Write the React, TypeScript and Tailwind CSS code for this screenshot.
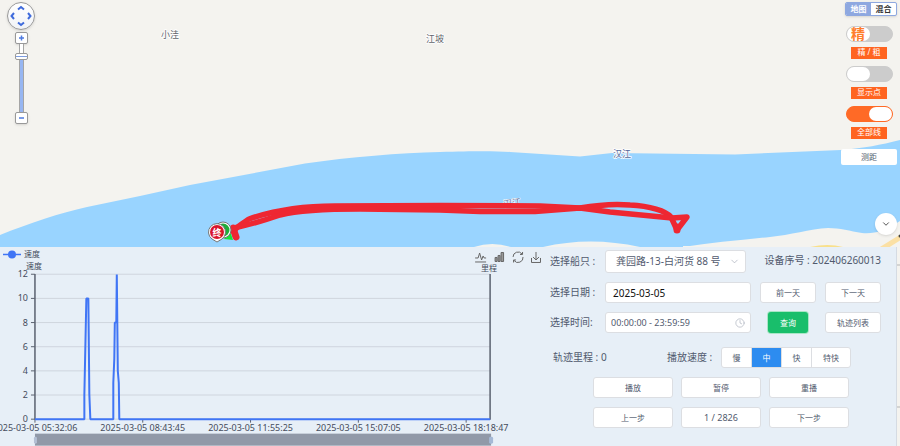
import { useState } from "react";
import { ChevronDown, Clock } from "lucide-react";
import clsx from "clsx";

const speeds = ["慢", "中", "快", "特快"];
const yTicks = [12, 10, 8, 6, 4, 2, 0];
const xTicks = [
  { x: 35, label: "2025-03-05 05:32:06" },
  { x: 143, label: "2025-03-05 08:43:45" },
  { x: 251, label: "2025-03-05 11:55:25" },
  { x: 359, label: "2025-03-05 15:07:05" },
  { x: 467, label: "2025-03-05 18:18:47" },
];

const buttonClass =
  "h-[21px] w-full rounded-[3px] border border-[#dcdee2] bg-white text-[8px] text-[#515a6e] flex items-center justify-center";

function RiverMap() {
  return (
    <svg
      className="absolute inset-0 h-full w-full"
      viewBox="0 0 900 446"
      preserveAspectRatio="xMinYMin slice"
    >
      <rect width="900" height="446" fill="#f4f3ef" />
      <path
        d="M0 235 C30 223 60 213 87 207 L140 196 L190 185 L305 163.500 C350 157 400 153 440 152 C475 151 495 151 510 152 L580 156.500 L612 153 L735 154.500 L841 150 C865 148 880 145 900 140 V221 C885 231 875 234 862 233 C850 231 840 228 828 228 C810 229 790 235 770 237 C740 240 710 243 683 247 V446 H0 Z"
        fill="#99d4ff"
      />
      <path d="M474 247 Q492 241 511 247 Z" fill="#f4f3ef" />
      <path d="M543 247 Q590 236 640 247 Z" fill="#f4f3ef" />
      <path d="M683 246 H900 V446 H683 Z" fill="#f4f3ef" />
      <path d="M810 247 Q828 243 843 247 Z" fill="#f8e08c" />
      <path d="M880 250 L901 237" stroke="#fbe0a4" strokeWidth="5" />
      <path d="M896 265 H900 M896 407 H900" stroke="#b5b5b5" />
      <circle cx="900" cy="236" r="1.500" fill="#444" />

      <g fontSize="9" fill="#60646c" textAnchor="middle" stroke="#fff" strokeWidth="1.500" paintOrder="stroke">
        <text x="170" y="38">小洼</text>
        <text x="435" y="42">江坡</text>
        <text x="622" y="157" fill="#52689a">汉江</text>
        <text x="512" y="206" fill="#52689a" strokeWidth="1" transform="rotate(-8 512 202)">汉江</text>
      </g>

      {/* sailed track, out and back */}
      <g fill="none" stroke="#ee2732" strokeWidth="5.500" strokeLinecap="round" strokeLinejoin="round">
        <path d="M236 237 C231 230 237 227 249 219 C275 210 305 206 335 206 L440 205.500 L540 206 L580 208 C600 204.500 620 204 630 205 C650 206 666 211 671 217 L677 230" />
        <path d="M234 228 C243 226 260 222 280 215 C300 210 330 209 360 209 L440 210 L480 211.500 L535 211.500 L580 208 L610 212 L672 218 L687 217 L677 230" />
        <path d="M233 228 L236 237 M677 227 V230" strokeWidth="7" />
      </g>

      {/* start and end markers */}
      <path d="M224 239 L233 240 L230 231 Z" fill="#15e53a" />
      <circle cx="223" cy="230" r="8" fill="#fff" stroke="#777" />
      <circle cx="223" cy="230" r="6.500" fill="#1fae3b" />
      <path
        d="M217 242 L212 239 A8.500 8.500 0 1 1 222 239 Z"
        fill="#fff"
        stroke="#777"
      />
      <circle cx="217" cy="232" r="7" fill="#d9152b" />
      <text x="217" y="236" fontSize="9" fontWeight="700" fill="#fff" textAnchor="middle">
        终
      </text>
    </svg>
  );
}

function MapNavigation() {
  return (
    <div className="flex w-[28px] flex-col items-center">
      <button
        aria-label="平移"
        className="h-[28px] w-[28px] rounded-full border border-[#999] bg-linear-to-b from-white to-[#f1f3f6] shadow-sm"
      >
        <svg viewBox="0 0 26 26" fill="none" stroke="#3f6bdc" strokeWidth="2">
          <path d="M10 6.500 L13 4 L16 6.500 M10 19.500 L13 22 L16 19.500 M6 10 L3.500 13 L6 16 M20 10 L22.500 13 L20 16" />
        </svg>
      </button>
      <button
        aria-label="放大"
        className="mt-[2px] h-[12px] w-[13px] rounded-[2px] border border-[#999] bg-white shadow-sm"
      >
        <svg viewBox="0 0 11 10" stroke="#4d7ae0" strokeWidth="1.500">
          <path d="M3 5 H8 M5.500 2.500 V7.500" />
        </svg>
      </button>
      <div className="grid justify-items-center">
        <div className="col-start-1 row-start-1 h-[68px] w-[5px] border-x border-[#a5a5a5] bg-linear-to-b from-white from-15% to-[#97b6f2] to-15%" />
        <input
          type="range"
          aria-label="缩放级别"
          min={0}
          max={100}
          defaultValue={14}
          className="col-start-1 row-start-1 h-[68px] w-[13px] appearance-none bg-transparent [writing-mode:vertical-lr] [&::-webkit-slider-thumb]:h-[7px] [&::-webkit-slider-thumb]:w-[13px] [&::-webkit-slider-thumb]:appearance-none [&::-webkit-slider-thumb]:rounded-[2px] [&::-webkit-slider-thumb]:border [&::-webkit-slider-thumb]:border-[#999] [&::-webkit-slider-thumb]:bg-[linear-gradient(#fff_2px,#7d9ce0_2px,#7d9ce0_3px,#fff_3px)]"
        />
      </div>
      <button
        aria-label="缩小"
        className="h-[12px] w-[13px] rounded-[2px] border border-[#999] bg-white shadow-sm"
      >
        <svg viewBox="0 0 11 10" stroke="#4d7ae0" strokeWidth="1.500">
          <path d="M3 5 H8" />
        </svg>
      </button>
    </div>
  );
}

type MapSwitchProps = {
  label: string;
  knob?: string;
  defaultChecked?: boolean;
};

function MapSwitch({ label, knob, defaultChecked }: MapSwitchProps) {
  const [checked, setChecked] = useState(!!defaultChecked);

  return (
    <label className="flex cursor-pointer flex-col items-center gap-[5px]">
      <input
        type="checkbox"
        className="sr-only"
        checked={checked}
        onChange={(e) => setChecked(e.target.checked)}
      />
      <span
        className={clsx(
          "flex h-[16px] w-[47px] rounded-full border",
          checked ? "justify-end border-[#ff6a26] bg-[#ff6a26]" : "border-[#ccc] bg-[#ccc]",
        )}
      >
        <span className="flex h-[14px] w-[23px] items-center justify-center rounded-full bg-white text-[14px] leading-none font-bold text-[#ff7d2b]">
          {knob}
        </span>
      </span>
      <span className="h-[12px] w-[36px] bg-[#ff6420] text-center text-[8px] leading-[10px] text-white">
        {label}
      </span>
    </label>
  );
}

function SpeedChart() {
  return (
    <svg viewBox="0 0 550 199" className="block w-full" fill="none">
      <g fill="#454c5c">
        <path d="M3 7.500 H21" stroke="#4075f5" strokeWidth="1.500" />
        <circle cx="12" cy="7.500" r="4" fill="#4075f5" />
        <text x="24" y="10" fontSize="8">速度</text>
        <text x="26" y="22" fontSize="8">速度</text>
        <text x="482" y="24" fontSize="8">里程</text>
      </g>

      {/* toolbox */}
      <g stroke="#666">
        <path d="M476 11 H479 L480.500 6 L482.500 13 L484 9 L485 11 H487 M476 15 H487" />
        <path d="M496 10.500 H498 V14.500 H496 Z M499 8.500 H501 V14.500 H499 Z M502 5.500 H504.500 V14.500 H502 Z" fill="#999" />
        <path d="M514 10 A5 5 0 0 1 523 7 M524 10 A5 5 0 0 1 515 13.500 M523.500 5 V7.500 H521 M514.500 15.500 V13 H517" />
        <path d="M537 5 V13 M534 10 L537 13 L540 10 M532.500 11 V15.500 H541.500 V11" />
      </g>

      {yTicks.map((value) => {
        const y = 172.5 - value * 12.1;
        return (
          <g key={value}>
            <path d={`M35 ${y} H491`} stroke="#cfd5de" />
            <path d={`M31 ${y} H35`} stroke="#5b6270" />
            <text x="28" y={y + 3} fontSize="9" fill="#454c5c" textAnchor="end">
              {value}
            </text>
          </g>
        );
      })}
      <path d="M35 27 V173 M491 27 V173" stroke="#5b6270" strokeWidth="1.500" />

      {xTicks.map((tick) => (
        <g key={tick.x}>
          <path d={`M${tick.x} 173 V176`} stroke="#5b6270" />
          <text x={tick.x} y="184" fontSize="9" fill="#454c5c" textAnchor="middle">
            {tick.label}
          </text>
        </g>
      ))}

      <path
        d="M35 172.500 H84.500 V148 L86.500 51.500 H88.500 L89.500 148 L90.500 172.500 H113.500 V136 L114.500 112 L115 76 L116.500 75 L117 27.500 L118 124 L119 136 L119.500 172.500 H491"
        stroke="#4075f5"
        strokeWidth="2"
        strokeLinejoin="bevel"
      />

      <rect x="35" y="187" width="457" height="12" fill="#9199a8" />
      <rect x="34" y="190" width="3" height="7" rx="1.500" fill="#b4c0d4" />
      <rect x="490" y="190" width="4" height="7" rx="1.500" fill="#a5b9d6" />
    </svg>
  );
}

function TrackForm() {
  const [speed, setSpeed] = useState("中");
  const [date, setDate] = useState("2025-03-05");
  const [time, setTime] = useState("00:00:00 - 23:59:59");

  return (
    <form
      className="w-[347px] shrink-0 pt-[3px] pb-4 pl-px text-[10px] text-[#515a6e]"
      onSubmit={(e) => e.preventDefault()}
    >
      <div className="grid grid-cols-[46px_146px_56px_56px] items-center gap-x-[9px] gap-y-[9px] whitespace-nowrap">
        <label htmlFor="ship">选择船只 :</label>
        <div className="grid w-[141px] items-center">
          <select
            id="ship"
            className="col-start-1 row-start-1 h-[23px] w-full appearance-none rounded-[3px] border border-[#dcdee2] bg-white pl-[10px] text-[10px]"
          >
            <option>龚园路-13-白河货 88 号</option>
          </select>
          <ChevronDown
            size={11}
            strokeWidth={1.5}
            className="pointer-events-none col-start-1 row-start-1 mr-[6px] justify-self-end text-[#a5abb8]"
          />
        </div>
        <p className="col-span-2 pb-[2px] text-right">设备序号 : 202406260013</p>

        <label htmlFor="date">选择日期 :</label>
        <input
          id="date"
          value={date}
          onChange={(e) => setDate(e.target.value)}
          className="h-[21px] w-full rounded-[3px] border border-[#dcdee2] bg-white px-[7px] text-[10px] text-[#111]"
        />
        <button className={buttonClass}>前一天</button>
        <button className={buttonClass}>下一天</button>

        <label htmlFor="time">选择时间:</label>
        <div className="grid items-center">
          <input
            id="time"
            value={time}
            onChange={(e) => setTime(e.target.value)}
            className="col-start-1 row-start-1 h-[21px] w-full rounded-[3px] border border-[#dcdee2] bg-white px-[5px] text-[9px]"
          />
          <Clock
            size={10}
            strokeWidth={1.5}
            className="pointer-events-none col-start-1 row-start-1 mr-[6px] justify-self-end text-[#a5abb8]"
          />
        </div>
        <button className="h-[21px] w-[40px] justify-self-center rounded-[3px] bg-[#19be6b] text-[8px] text-white shadow-[0_0_0_1px_#a9e6c6]">
          查询
        </button>
        <button className={buttonClass}>轨迹列表</button>
      </div>

      <div className="mt-[14px] flex items-center pl-[3px]">
        <p className="w-[114px]">轨迹里程 : 0</p>
        <span className="w-[54px]">播放速度 :</span>
        <div className="flex h-[21px] divide-x divide-[#dcdee2] overflow-hidden rounded-[3px] border border-[#dcdee2] bg-white text-[8px]">
          {speeds.map((item) => (
            <button
              key={item}
              type="button"
              onClick={() => setSpeed(item)}
              className={clsx(
                item.length > 1 ? "w-[38px]" : "w-[30px]",
                item === speed && "bg-[#2d8cf0] text-white",
              )}
            >
              {item}
            </button>
          ))}
        </div>
      </div>

      <div className="mt-[9px] grid grid-cols-[80px_80px_80px] gap-x-[8px] gap-y-[9px] pb-[2px] pl-[43px]">
        <button className={buttonClass}>播放</button>
        <button className={buttonClass}>暂停</button>
        <button className={buttonClass}>重播</button>
        <button className={buttonClass}>上一步</button>
        <button className={buttonClass}>
          <span className="text-[9px]">1 / 2826</span>
        </button>
        <button className={buttonClass}>下一步</button>
      </div>
    </form>
  );
}

export default function App() {
  return (
    <div className="relative flex min-h-screen flex-col overflow-hidden font-['Noto_Sans','Noto_Sans_CJK_SC',sans-serif]">
      <RiverMap />

      <section className="relative flex flex-1 justify-between pt-[2px] pr-[3px] pb-[12px] pl-[7px]">
        <MapNavigation />
        <div className="flex flex-col items-end justify-between">
          <div className="flex w-[56px] flex-col items-center">
            <div className="flex h-[14px] w-[52px] self-end overflow-hidden rounded-[2px] border border-[#8ea8e0] bg-white text-[8px] leading-none font-bold shadow">
              <button className="flex-1 bg-[#8ea8e0] text-white">地图</button>
              <button className="flex-1 text-[#333]">混合</button>
            </div>
            <div className="mt-[10px] flex flex-col gap-[7px]">
              <MapSwitch label="精 / 粗" knob="精" />
              <MapSwitch label="显示点" />
              <MapSwitch label="全部线" defaultChecked />
            </div>
            <button className="mt-[10px] h-[16px] w-full rounded-[2px] bg-white text-[8px] leading-none text-[#515a6e]">
              测距
            </button>
          </div>
          <button
            aria-label="收起"
            className="flex h-[22px] w-[22px] items-center justify-center rounded-full bg-white text-[#333] shadow"
          >
            <ChevronDown size={10} />
          </button>
        </div>
      </section>

      <section className="relative mr-[3px] flex border-r border-[#d5dbe3] bg-[#e7eff7]">
        <div className="min-w-0 flex-1">
          <SpeedChart />
        </div>
        <TrackForm />
      </section>
    </div>
  );
}
